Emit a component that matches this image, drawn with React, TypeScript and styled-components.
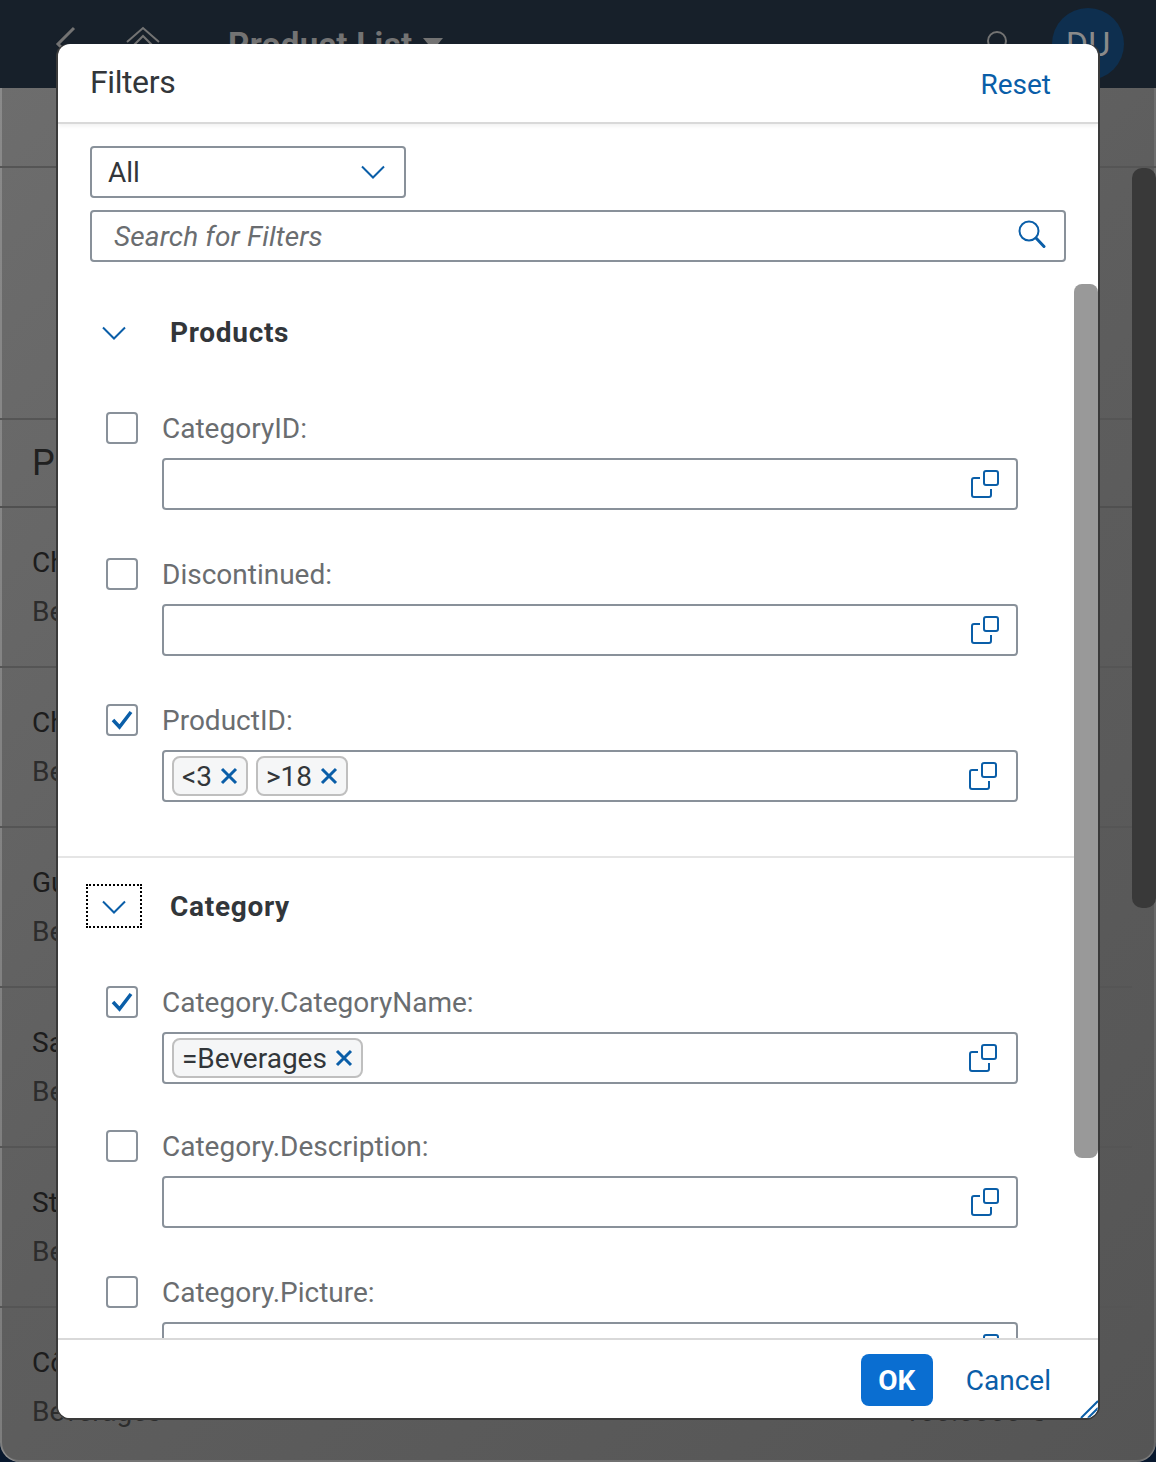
import styled, { createGlobalStyle } from "styled-components";

const GlobalStyle = createGlobalStyle`
  html, body {
    margin: 0;
    padding: 0;
    background: #08182e;
    font-family: Roboto, "Noto Sans", "Liberation Sans", sans-serif;
  }
  * {
    box-sizing: border-box;
  }
`;

const Screen = styled.div`
  position: relative;
  width: 1156px;
  height: 1462px;
  overflow: hidden;
`;

const Page = styled.div`
  height: 1462px;
  display: flex;
  flex-direction: column;
  overflow: hidden;
  border-radius: 0 0 20px 20px;
  background: linear-gradient(135deg, #6e6e6e 0%, #5e5e5e 50%, #555555 100%);
  box-shadow: inset 2px 0 0 rgba(255, 255, 255, 0.2),
    inset -2px 0 0 rgba(255, 255, 255, 0.1),
    inset 0 -2px 0 rgba(255, 255, 255, 0.15);
`;

const ShellBar = styled.header`
  flex: 0 0 88px;
  display: flex;
  align-items: center;
  padding: 0 32px 0 52px;
  background: #17202a;
  color: #737373;
`;

const ShellTitle = styled.div`
  display: flex;
  align-items: center;
  gap: 10px;
  margin-left: 68px;
  font-size: 33px;
  font-weight: 700;
  letter-spacing: 0.4px;
`;

const ShellSpacer = styled.div`
  flex: 1;
`;

const Avatar = styled.div`
  width: 72px;
  height: 72px;
  margin-left: 41px;
  display: flex;
  align-items: center;
  justify-content: center;
  border-radius: 50%;
  background: #0e2f4f;
  font-size: 34px;
  color: #8a8a8a;
`;

const ObjectHeader = styled.div`
  flex: 0 0 80px;
  border-bottom: 2px solid #555555;
`;

const ObjectFilters = styled.div`
  flex: 0 0 252px;
  border-bottom: 2px solid #555555;
`;

const ListTitle = styled.div`
  flex: 0 0 88px;
  display: flex;
  align-items: center;
  padding: 0 32px;
  border-bottom: 2px solid #505050;
  font-size: 36px;
  color: #202020;
  margin-right: 24px;
`;

const ListRow = styled.div`
  flex: 0 0 160px;
  display: flex;
  flex-direction: column;
  gap: 17px;
  padding: 39px 32px 0;
  margin-right: 24px;
  border-bottom: 2px solid #555555;
`;

const RowName = styled.div`
  font-size: 28px;
  line-height: 32px;
  color: #1c1c1c;
`;

const RowCategory = styled.div`
  display: flex;
  justify-content: space-between;
  font-size: 28px;
  line-height: 32px;
  color: #2c2c2c;
  padding-right: 56px;
`;

const PageScrollThumb = styled.div`
  position: absolute;
  left: 1132px;
  top: 168px;
  width: 24px;
  height: 740px;
  border-radius: 10px;
  background: #393939;
`;

const Dialog = styled.div`
  position: absolute;
  left: 58px;
  top: 44px;
  width: 1040px;
  height: 1374px;
  display: flex;
  flex-direction: column;
  overflow: hidden;
  border-radius: 12px;
  background: #ffffff;
  color: #32363a;
`;

const DialogFrame = styled.div`
  position: absolute;
  left: 58px;
  top: 44px;
  width: 1040px;
  height: 1374px;
  border-radius: 12px;
  box-shadow: -2px 0 0 #3a3a3a, 2px 0 0 #3a3a3a, 0 2px 0 #3a3a3a;
`;

const DialogHeader = styled.div`
  flex: 0 0 80px;
  display: flex;
  align-items: center;
  justify-content: space-between;
  padding: 0 47px 0 32px;
  border-bottom: 2px solid #d9d9d9;
  box-shadow: 0 2px 4px rgba(0, 0, 0, 0.06);
  z-index: 1;
`;

const DialogTitle = styled.h1`
  margin: 0 0 2px;
  font-size: 32px;
  line-height: 40px;
  font-weight: 400;
  letter-spacing: -0.4px;
`;

const LinkButton = styled.button`
  border: 0;
  padding: 4px 0 0;
  background: none;
  font: inherit;
  font-size: 28px;
  line-height: 36px;
  color: #0a5ea8;
`;

const DialogBody = styled.div`
  flex: 1;
  min-height: 0;
  overflow: hidden;
  position: relative;
  padding-top: 22px;
`;

const ScrollThumb = styled.div`
  position: absolute;
  right: 0;
  top: 160px;
  width: 24px;
  height: 874px;
  border-radius: 8px;
  background: #999999;
`;

const Toolbar = styled.div`
  display: flex;
  flex-direction: column;
  align-items: flex-start;
  gap: 12px;
  padding: 0 32px;
  margin-bottom: 48px;
`;

const Field = styled.div<{ $width: number }>`
  width: ${(props) => props.$width}px;
  height: 52px;
  display: flex;
  align-items: center;
  justify-content: space-between;
  border: 2px solid #89919a;
  border-radius: 4px;
  background: #ffffff;
`;

const SelectText = styled.span`
  padding-left: 16px;
  font-size: 28px;
`;

const Placeholder = styled.span`
  padding-left: 22px;
  font-size: 28px;
  font-style: italic;
  letter-spacing: 0.15px;
  color: #6a6d70;
`;

const FieldIcon = styled.span<{ $right: number }>`
  display: flex;
  margin-right: ${(props) => props.$right}px;
`;

const GroupHeader = styled.div`
  display: flex;
  align-items: center;
  gap: 28px;
  height: 44px;
  padding-left: 28px;
  margin-bottom: 58px;
`;

const ExpandButton = styled.span<{ $focused?: boolean }>`
  width: 56px;
  height: 44px;
  display: flex;
  align-items: center;
  justify-content: center;
  padding-top: 2px;
  border: 2px dotted ${(props) => (props.$focused ? "#000000" : "transparent")};
`;

const GroupTitle = styled.h2`
  margin: 0;
  font-size: 28px;
  font-weight: 700;
  letter-spacing: 0.7px;
`;

const Group = styled.section`
  padding-bottom: 6px;
`;

const GroupRule = styled.div`
  height: 2px;
  margin: 0 24px 26px 0;
  background: #e5e5e5;
`;

const FilterRow = styled.div<{ $tight?: boolean }>`
  display: grid;
  grid-template-columns: 32px 856px;
  column-gap: 24px;
  row-gap: 14px;
  padding-left: 48px;
  margin-bottom: ${(props) => (props.$tight ? 46 : 48)}px;
  align-items: center;
`;

const CheckBox = styled.span`
  width: 32px;
  height: 32px;
  display: flex;
  align-items: center;
  justify-content: center;
  border: 2px solid #89919a;
  border-radius: 4px;
`;

const FilterLabel = styled.label`
  padding-top: 2px;
  font-size: 28px;
  line-height: 30px;
  color: #6a6d70;
`;

const FilterInput = styled.div`
  grid-column: 2;
  height: 52px;
  display: flex;
  align-items: center;
  justify-content: space-between;
  padding-left: 8px;
  border: 2px solid #89919a;
  border-radius: 4px;
`;

const TokenList = styled.div`
  display: flex;
  gap: 8px;
`;

const Token = styled.span`
  height: 40px;
  display: flex;
  align-items: center;
  gap: 8px;
  padding: 0 8px;
  border: 2px solid #bfbfbf;
  border-radius: 8px;
  background: #f5f6f7;
  font-size: 28px;
`;

const DialogFooter = styled.div`
  flex: 0 0 80px;
  display: flex;
  align-items: center;
  justify-content: flex-end;
  gap: 33px;
  padding: 0 47px 0 0;
  border-top: 2px solid #d9d9d9;
  background: #ffffff;
  z-index: 1;
`;

const PrimaryButton = styled.button`
  width: 72px;
  height: 52px;
  margin-top: 2px;
  border: 0;
  border-radius: 8px;
  background: #0a6ed1;
  color: #ffffff;
  font: inherit;
  font-size: 28px;
  font-weight: 700;
`;

const ResizeHandle = styled.svg`
  position: absolute;
  right: 0;
  bottom: 0;
  z-index: 2;
`;

const BLUE = "#0a5ea8";

const Chevron = () => (
  <svg width="24" height="14" viewBox="0 0 24 14" fill="none">
    <path d="M1 1.500 12 12.500 23 1.500" stroke={BLUE} strokeWidth="2" />
  </svg>
);

const SearchIcon = () => (
  <svg width="28" height="32" viewBox="0 0 28 32" fill="none">
    <circle cx="11" cy="11" r="9.500" stroke={BLUE} strokeWidth="2" />
    <path d="M18 18 26 26.500" stroke={BLUE} strokeWidth="3" strokeLinecap="round" />
  </svg>
);

const ValueHelpIcon = () => (
  <svg width="28" height="28" viewBox="0 0 28 28" fill="none">
    <rect x="13" y="1" width="14" height="14" rx="2" stroke={BLUE} strokeWidth="2" />
    <path
      d="M9 8H3a2 2 0 0 0-2 2v15a2 2 0 0 0 2 2h15a2 2 0 0 0 2-2v-6"
      stroke={BLUE}
      strokeWidth="2"
    />
  </svg>
);

const CloseIcon = () => (
  <svg width="18" height="18" viewBox="0 0 18 18" fill="none">
    <path d="M2 2 16 16M16 2 2 16" stroke={BLUE} strokeWidth="3" />
  </svg>
);

const CheckIcon = () => (
  <svg width="22" height="20" viewBox="0 0 22 20" fill="none">
    <path d="M2 10 8.500 17 20 2" stroke={BLUE} strokeWidth="3.500" />
  </svg>
);

interface FilterItem {
  label: string;
  checked?: boolean;
  tokens?: string[];
  tight?: boolean;
}

const products: FilterItem[] = [
  { label: "CategoryID:" },
  { label: "Discontinued:" },
  { label: "ProductID:", checked: true, tokens: ["<3", ">18"] },
];

const category: FilterItem[] = [
  { label: "Category.CategoryName:", checked: true, tokens: ["=Beverages"], tight: true },
  { label: "Category.Description:" },
  { label: "Category.Picture:" },
];

const rows = ["Chai", "Chang", "Guaraná Fantástica", "Sasquatch Ale", "Steeleye Stout", "Côte de Blaye"];

const FilterField = ({ item }: { item: FilterItem }) => (
  <FilterRow $tight={item.tight}>
    <CheckBox>{item.checked && <CheckIcon />}</CheckBox>
    <FilterLabel>{item.label}</FilterLabel>
    <FilterInput>
      <TokenList>
        {item.tokens?.map((token) => (
          <Token key={token}>
            {token}
            <CloseIcon />
          </Token>
        ))}
      </TokenList>
      <FieldIcon $right={item.tokens ? 19 : 17}>
        <ValueHelpIcon />
      </FieldIcon>
    </FilterInput>
  </FilterRow>
);

export default function App() {
  return (
    <Screen>
      <GlobalStyle />
      <Page>
        <ShellBar>
          <svg width="28" height="36" viewBox="0 0 28 36" fill="none">
            <path d="M22 2 6 18 22 34" stroke="#737373" strokeWidth="3" />
          </svg>
          <svg width="34" height="36" viewBox="0 0 34 36" fill="none" style={{ marginLeft: 46 }}>
            <path d="M1 16 17 2 33 16M5 22 17 10 29 22" stroke="#737373" strokeWidth="2" />
          </svg>
          <ShellTitle>
            Product List
            <svg width="20" height="12" viewBox="0 0 20 12">
              <path d="M0 0H20L10 12Z" fill="#737373" />
            </svg>
          </ShellTitle>
          <ShellSpacer />
          <svg width="28" height="34" viewBox="0 0 28 34" fill="none">
            <circle cx="14" cy="14" r="9" stroke="#737373" strokeWidth="2" />
          </svg>
          <Avatar>DU</Avatar>
        </ShellBar>
        <ObjectHeader />
        <ObjectFilters />
        <ListTitle>Products</ListTitle>
        {rows.map((name) => (
          <ListRow key={name}>
            <RowName>{name}</RowName>
            <RowCategory>
              <span>Beverages</span>
              <span>100.0000 €</span>
            </RowCategory>
          </ListRow>
        ))}
      </Page>
      <PageScrollThumb />
      <DialogFrame />
      <Dialog>
        <DialogHeader>
          <DialogTitle>Filters</DialogTitle>
          <LinkButton>Reset</LinkButton>
        </DialogHeader>
        <DialogBody>
          <Toolbar>
            <Field $width={316}>
              <SelectText>All</SelectText>
              <FieldIcon $right={19}>
                <Chevron />
              </FieldIcon>
            </Field>
            <Field $width={976}>
              <Placeholder>Search for Filters</Placeholder>
              <FieldIcon $right={18}>
                <SearchIcon />
              </FieldIcon>
            </Field>
          </Toolbar>
          <Group>
            <GroupHeader>
              <ExpandButton>
                <Chevron />
              </ExpandButton>
              <GroupTitle>Products</GroupTitle>
            </GroupHeader>
            {products.map((item) => (
              <FilterField key={item.label} item={item} />
            ))}
          </Group>
          <GroupRule />
          <Group>
            <GroupHeader>
              <ExpandButton $focused>
                <Chevron />
              </ExpandButton>
              <GroupTitle>Category</GroupTitle>
            </GroupHeader>
            {category.map((item) => (
              <FilterField key={item.label} item={item} />
            ))}
          </Group>
          <ScrollThumb />
        </DialogBody>
        <DialogFooter>
          <PrimaryButton>OK</PrimaryButton>
          <LinkButton>Cancel</LinkButton>
        </DialogFooter>
        <ResizeHandle width="18" height="18" viewBox="0 0 18 18" fill="none">
          <path d="M1 18 18 1M8 18 18 8M14 18 18 14" stroke={BLUE} strokeWidth="2" />
        </ResizeHandle>
      </Dialog>
    </Screen>
  );
}
